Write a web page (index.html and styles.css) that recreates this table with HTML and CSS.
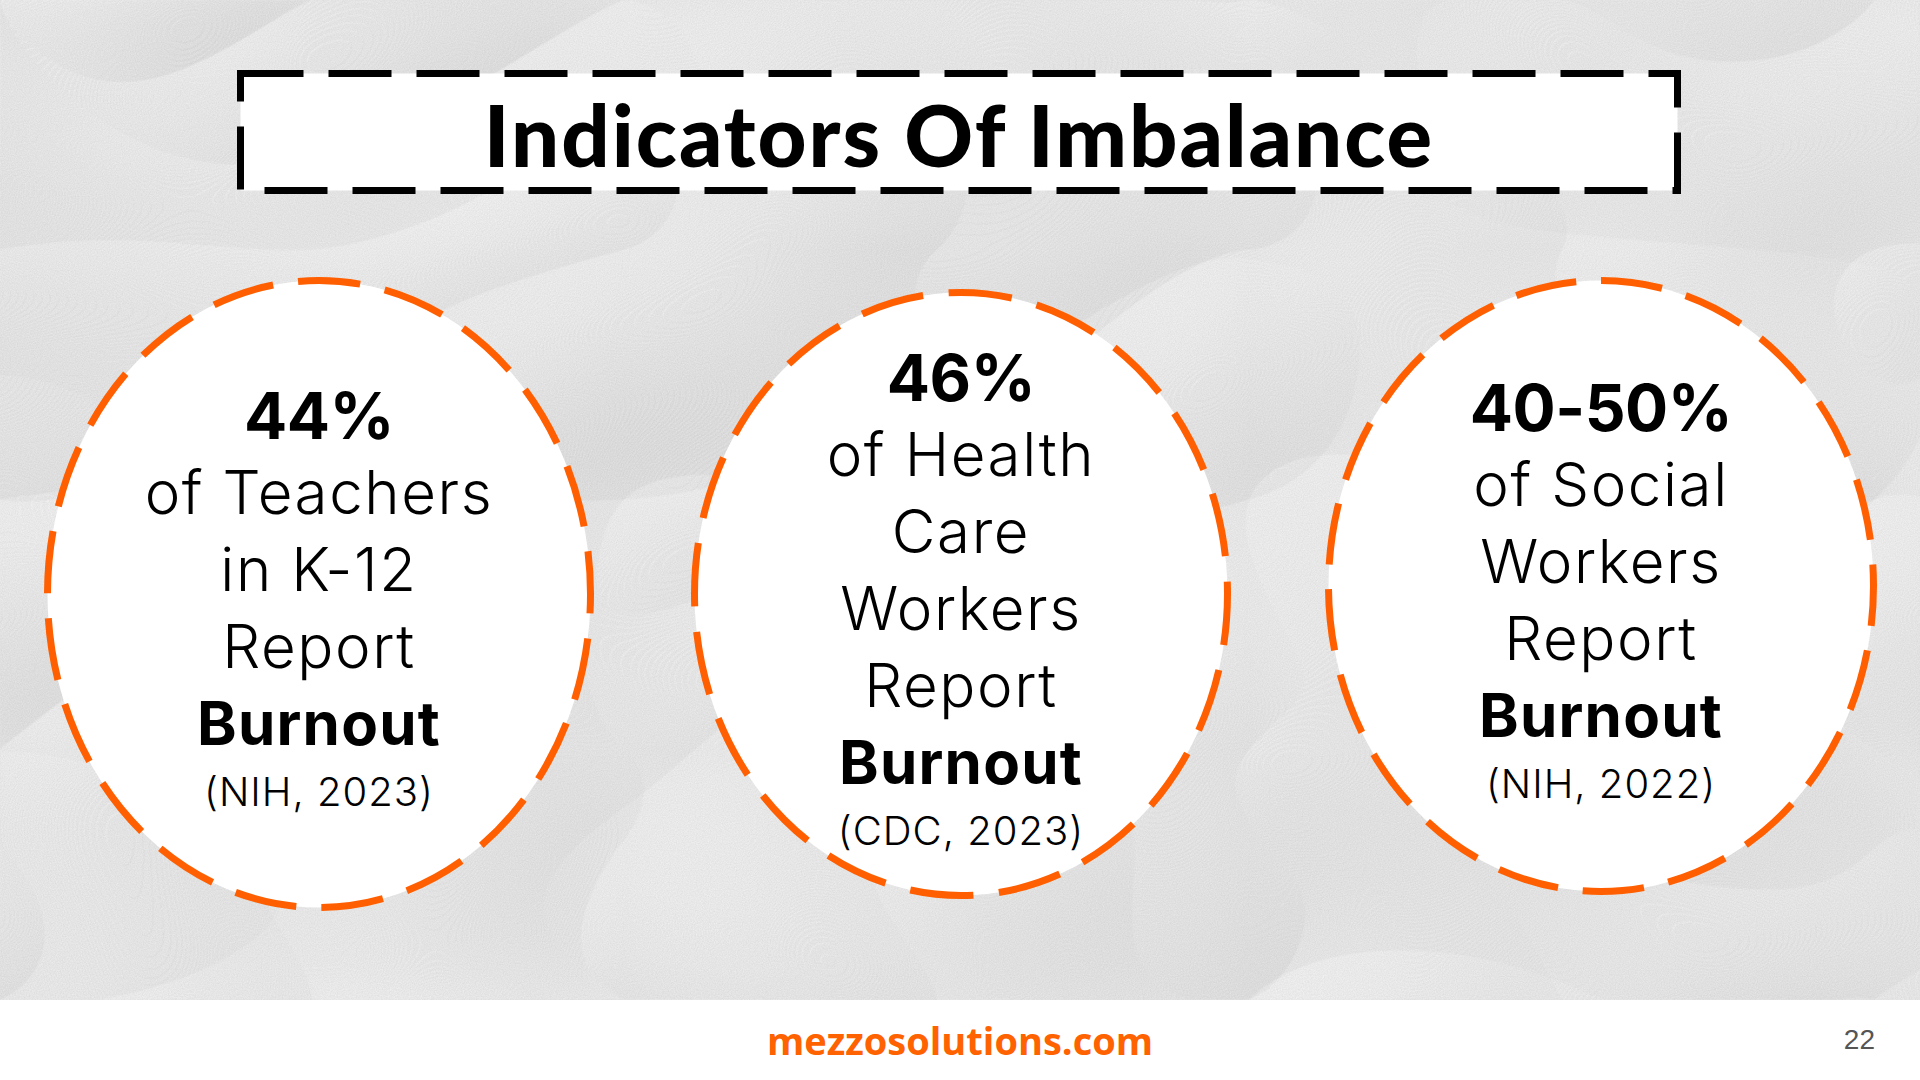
FILE: index.html
```html
<!DOCTYPE html>
<html lang="en">
<head>
<meta charset="utf-8">
<title>Indicators Of Imbalance</title>
<link rel="stylesheet" href="styles.css">
</head>
<body>
<main class="slide">
  <svg class="paper" width="1920" height="1000" viewBox="0 0 1920 1000" aria-hidden="true">
    <filter id="crumple" x="0" y="0" width="100%" height="100%" color-interpolation-filters="sRGB">
      <feTurbulence type="turbulence" baseFrequency="0.0016 0.002" numOctaves="2" seed="23" result="noise"/>
      <feDiffuseLighting in="noise" lighting-color="#ffffff" surfaceScale="8" diffuseConstant="1.07" result="light">
        <feDistantLight azimuth="225" elevation="60"/>
      </feDiffuseLighting>
      <feTurbulence type="fractalNoise" baseFrequency="0.85" numOctaves="2" seed="3" result="grain"/>
      <feColorMatrix in="grain" type="matrix" values="0 0 0 0 0  0 0 0 0 0  0 0 0 0 0  0 0 0 0.08 0" result="grainA"/>
      <feComposite in="grainA" in2="light" operator="over"/>
    </filter>
    <rect width="1920" height="1000" filter="url(#crumple)"/>
  </svg>

  <div class="content">
    <header class="title-box">
      <svg class="frame" viewBox="0 0 1444 124" aria-hidden="true">
        <rect x="3.5" y="3.5" width="1437" height="117" stroke-dasharray="63 25"/>
      </svg>
      <h1 class="title">Indicators Of Imbalance</h1>
    </header>

    <section class="stats">
      <div class="stat s1">
        <svg class="ring" viewBox="0 0 550 634" aria-hidden="true">
          <ellipse cx="275" cy="317" rx="271.5" ry="313.5" pathLength="2100" stroke-dasharray="71.3 28.7" stroke-dashoffset="49"/>
        </svg>
        <div class="stat-text">
          <span class="num">44%</span>
          <span class="line">of Teachers</span>
          <span class="line">in K-12</span>
          <span class="line">Report</span>
          <span class="line strong">Burnout</span>
          <span class="src">(NIH, 2023)</span>
        </div>
      </div>

      <div class="stat s2">
        <svg class="ring" viewBox="0 0 540 610" aria-hidden="true">
          <ellipse cx="270" cy="305" rx="266.5" ry="301.5" pathLength="2000" stroke-dasharray="71.3 28.7" stroke-dashoffset="14"/>
        </svg>
        <div class="stat-text">
          <span class="num">46%</span>
          <span class="line">of Health</span>
          <span class="line">Care</span>
          <span class="line">Workers</span>
          <span class="line">Report</span>
          <span class="line strong">Burnout</span>
          <span class="src">(CDC, 2023)</span>
        </div>
      </div>

      <div class="stat s3">
        <svg class="ring" viewBox="0 0 552 618" aria-hidden="true">
          <ellipse cx="276" cy="309" rx="272.5" ry="305.5" pathLength="2100" stroke-dasharray="71.3 28.7" stroke-dashoffset="25"/>
        </svg>
        <div class="stat-text">
          <span class="num">40-50%</span>
          <span class="line">of Social</span>
          <span class="line">Workers</span>
          <span class="line">Report</span>
          <span class="line strong">Burnout</span>
          <span class="src">(NIH, 2022)</span>
        </div>
      </div>
    </section>
  </div>
</main>

<footer class="footer">
  <span class="site">mezzosolutions.com</span>
  <span class="page">22</span>
</footer>
</body>
</html>
```

FILE: styles.css
```css
html, body {
  margin: 0;
  padding: 0;
}

body {
  width: 1920px;
  height: 1080px;
  overflow: hidden;
  background: #ffffff;
  font-family: Inter, "Open Sans", "Liberation Sans", sans-serif;
  color: #000000;
}

.slide {
  position: relative;
  height: 1000px;
  overflow: hidden;
  background: #e8e8e8;
}

.paper {
  position: absolute;
  left: 0;
  top: 0;
  width: 1920px;
  height: 1000px;
}

.content {
  position: relative;
  padding-top: 70px;
}

.title-box {
  position: relative;
  margin-left: 237px;
  width: 1444px;
  height: 124px;
  display: flex;
  align-items: center;
  justify-content: center;
}

.frame {
  position: absolute;
  left: 0;
  top: 0;
  width: 100%;
  height: 100%;
}

.frame rect {
  fill: #ffffff;
  stroke: #000000;
  stroke-width: 7;
}

.title {
  position: relative;
  margin: 4px 0 0;
  font-family: Lato, "Liberation Sans", sans-serif;
  font-weight: 900;
  font-size: 85px;
  line-height: 84px;
  letter-spacing: 2px;
  color: #000000;
  white-space: nowrap;
}

.stats {
  display: flex;
  align-items: flex-start;
  margin-top: 83px;
  padding-left: 44px;
}

.stat {
  position: relative;
  box-sizing: border-box;
  display: flex;
  flex-direction: column;
  align-items: center;
  justify-content: center;
  padding-top: 10px;
  flex: none;
}

.s1 {
  width: 550px;
  height: 634px;
}

.s2 {
  width: 540px;
  height: 610px;
  margin-left: 97px;
  margin-top: 12px;
}

.s3 {
  width: 552px;
  height: 618px;
  margin-left: 94px;
}

.ring {
  position: absolute;
  left: 0;
  top: 0;
  width: 100%;
  height: 100%;
  overflow: visible;
}

.ring ellipse {
  fill: #ffffff;
  stroke: #ff5f00;
  stroke-width: 7;
}

.stat-text {
  position: relative;
  display: flex;
  flex-direction: column;
  align-items: center;
  text-align: center;
  white-space: nowrap;
}

.num {
  font-weight: 700;
  font-size: 64px;
  line-height: 77px;
  letter-spacing: -0.5px;
}

.line {
  font-weight: 300;
  font-size: 60px;
  line-height: 77px;
  letter-spacing: 1.6px;
}

.line.strong {
  font-weight: 700;
  letter-spacing: 1.2px;
}

.src {
  font-weight: 300;
  font-size: 40px;
  line-height: 59px;
  letter-spacing: 1px;
}

.footer {
  height: 80px;
  display: grid;
  grid-template-columns: 1fr auto 1fr;
  align-items: center;
}

.site {
  grid-column: 2;
  font-family: "Open Sans", "Liberation Sans", sans-serif;
  font-weight: 700;
  font-size: 38px;
  line-height: 80px;
  color: #ff6200;
}

.page {
  grid-column: 3;
  justify-self: end;
  padding-right: 45px;
  font-family: "Liberation Sans", Arial, sans-serif;
  font-size: 28px;
  line-height: 80px;
  color: #555555;
}
```
